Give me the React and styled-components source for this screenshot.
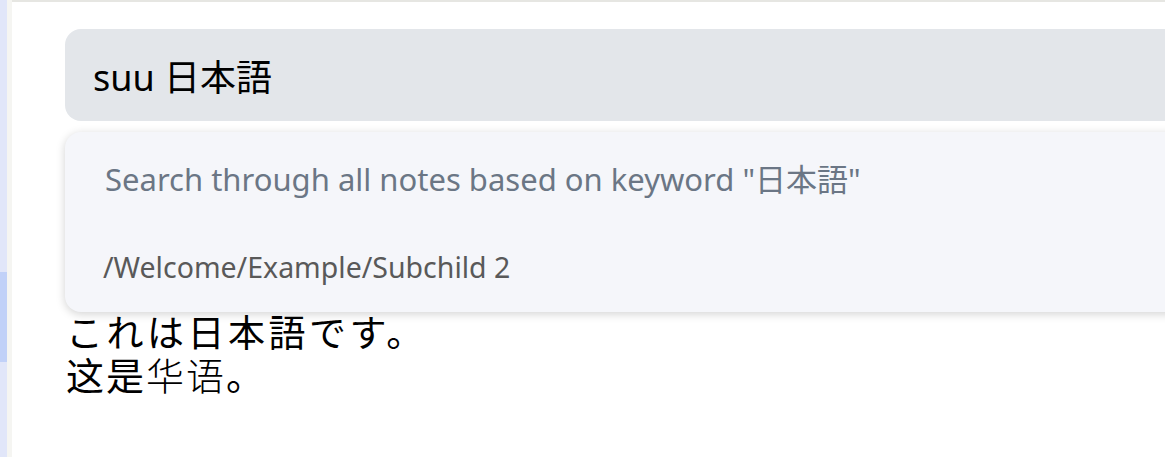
import styled, { createGlobalStyle } from "styled-components";

const Global = createGlobalStyle`
  html, body {
    margin: 0;
    padding: 0;
    height: 100%;
    overflow: hidden;
    background: #ffffff;
  }
  #root {
    height: 100%;
  }
`

const Page = styled.div`
  display: flex;
  height: 457px;
  font-family: "Noto Sans", "Noto Sans CJK JP", sans-serif;
`

const Sidebar = styled.div`
  width: 7px;
  flex-shrink: 0;
  background: #e1e6f9;
  display: flex;
  flex-direction: column;
  padding-top: 272px;
  box-sizing: border-box;
`

const SidebarActive = styled.div`
  height: 90px;
  background: #c1d1f8;
`

const Divider = styled.div`
  width: 5px;
  flex-shrink: 0;
  background: #f5f5f2;
`

const Main = styled.div`
  flex: 1;
  min-width: 0;
  border-top: 2px solid #e6e6e2;
  padding: 27px 0 0 53px;
  box-sizing: border-box;
`

const SearchWrap = styled.div`
  position: relative;
  width: 1200px;
`

const SearchInput = styled.div`
  height: 92px;
  background: #e3e6ea;
  border-radius: 16px;
  display: flex;
  align-items: center;
  padding-left: 28px;
  font-size: 36px;
  color: #000000;
`

const Dropdown = styled.div`
  position: absolute;
  left: 0;
  right: 0;
  top: calc(100% + 11px);
  background: #f5f6fa;
  border-radius: 16px;
  box-shadow: 0 2px 10px rgba(0, 0, 0, 0.18);
  display: flex;
  flex-direction: column;
  z-index: 2;
`

const Item = styled.div`
  height: 90px;
  display: flex;
  align-items: center;
  padding-left: ${(p) => p.$indent}px;
  font-size: ${(p) => p.$size}px;
  color: ${(p) => p.$color};
`

const Note = styled.div`
  margin-top: 190px;
  padding-left: 1px;
  line-height: 43px;
  color: #000000;
`

const Line = styled.div`
  font-size: ${(p) => p.$size}px;
  letter-spacing: ${(p) => p.$spacing}px;
  white-space: nowrap;
`

const Thin = styled.span`
  font-weight: 300;
`

const App = () => {
  return (
    <Page>
      <Global />
      <Sidebar>
        <SidebarActive />
      </Sidebar>
      <Divider />
      <Main>
        <SearchWrap>
          <SearchInput>suu 日本語</SearchInput>
          <Dropdown>
            <Item $indent={40} $size={31} $color="#6b7685">
              Search through all notes based on keyword "日本語"
            </Item>
            <Item $indent={38} $size={28.5} $color="#595959">
              /Welcome/Example/Subchild 2
            </Item>
          </Dropdown>
        </SearchWrap>
        <Note>
          <Line $size={37} $spacing={3.5}>これは日本語です。</Line>
          <Line $size={38} $spacing={2}>这是<Thin>华语</Thin>。</Line>
        </Note>
      </Main>
    </Page>
  )
}

export default App;
